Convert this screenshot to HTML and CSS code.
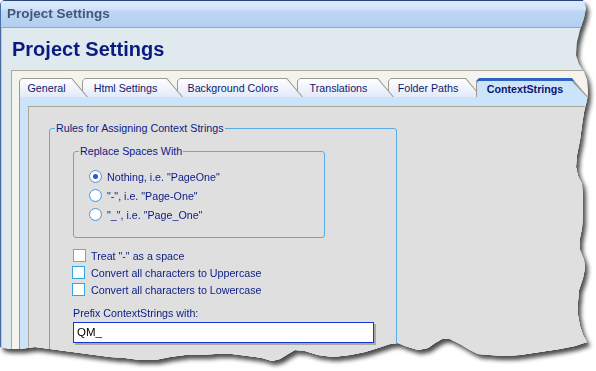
FILE: index.html
```html
<!DOCTYPE html>
<html lang="en">

<head>
    <meta charset="UTF-8">
    <title>Project Settings</title>
    <link rel="stylesheet" href="styles.css">
</head>

<body>
    <div class="sheet">
        <div class="window">
            <div class="titlebar">Project Settings</div>
            <div class="client">
                <h1 class="heading">Project Settings</h1>
                <div class="panel">
                    <div class="tabs">
                        <div class="tab t1"><span class="face">General</span></div>
                        <div class="tab t2"><span class="face">Html Settings</span></div>
                        <div class="tab t3"><span class="face">Background Colors</span></div>
                        <div class="tab t4"><span class="face">Translations</span></div>
                        <div class="tab t5"><span class="face">Folder Paths</span></div>
                        <div class="tab t6 active"><span class="face">ContextStrings</span></div>
                    </div>
                    <div class="tabpage">
                        <div class="pane">
                            <div class="group outer">
                                <span class="legend">Rules for Assigning Context Strings</span>
                                <div class="group inner">
                                    <span class="legend">Replace Spaces With</span>
                                    <div class="opt"><span class="radio on"></span>Nothing, i.e. "PageOne"</div>
                                    <div class="opt"><span class="radio"></span>"-", i.e. "Page-One"</div>
                                    <div class="opt"><span class="radio"></span>"_", i.e. "Page_One"</div>
                                </div>
                                <div class="checks">
                                    <div class="check"><span class="box plain"></span>Treat "-" as a space</div>
                                    <div class="check"><span class="box"></span>Convert all characters to Uppercase</div>
                                    <div class="check"><span class="box"></span>Convert all characters to Lowercase</div>
                                </div>
                                <div class="prefix">
                                    <div class="prefix_label">Prefix ContextStrings with:</div>
                                    <div class="textbox">QM_</div>
                                </div>
                            </div>
                        </div>
                    </div>
                </div>
            </div>
        </div>
    </div>
</body>

</html>
```

FILE: styles.css
```css
* {
    margin: 0;
    padding: 0;
    box-sizing: border-box;
}

body {
    background: #fff;
    font-family: "Liberation Sans", Arial, sans-serif;
    font-size: 10.7px;
    color: #0b1b86;
}

/* torn screenshot edge */
.sheet {
    width: 596px;
    height: 371px;
    filter: drop-shadow(3px 4px 2px rgba(0, 0, 0, .7));
}
.window {
    width: 596px;
    height: 371px;
    overflow: hidden;
    background: #dfe9ee;
    border-left: 1px solid #4a6ea4;
    border-top-left-radius: 5px;
    clip-path: polygon(0 0, 583px 0, 586px 8px, 584px 18px, 580px 30px, 577px 42px, 576px 55px, 579px 64px, 584px 72px, 587px 80px, 588px 92px, 587px 100px, 584px 112px, 582px 125px, 580px 140px, 577px 155px, 576px 167px, 578px 176px, 582px 184px, 583px 200px, 583px 215px, 582px 228px, 580px 238px, 580px 250px, 584px 260px, 585px 268px, 583px 278px, 579px 290px, 578px 302px, 578px 315px, 580px 326px, 583px 335px, 587px 342px,
        575px 346px, 560px 349px, 540px 352px, 520px 355px, 505px 356px, 490px 355px, 478px 354px, 470px 350px, 460px 344px, 450px 339px, 442px 339px, 435px 343px, 428px 348px, 418px 350px, 405px 346px, 398px 343px, 390px 344px, 378px 348px, 365px 352px, 350px 355px, 333px 357px, 318px 355px, 305px 351px, 295px 350px, 288px 354px, 280px 359px, 272px 361px, 262px 358px, 248px 356px, 232px 354px, 215px 354px, 200px 355px, 185px 355px, 170px 357px, 155px 360px, 140px 360px, 125px 358px, 110px 357px, 95px 355px, 80px 353px, 65px 351px, 50px 349px, 35px 347px, 20px 349px, 8px 349px, 0 347px);
}

.titlebar {
    height: 28px;
    border-top: 1px solid #28467a;
    border-bottom: 1px solid #8ea9d1;
    background: linear-gradient(#dbeafd 0, #d3e4fb 30%, #bdd6f4 40%, #b3cef0 100%);
    padding-left: 6px;
    line-height: 26px;
    font-size: 13.5px;
    font-weight: bold;
    color: #44577a;
}

.client {
    border-left: 1px solid #b4c8de;
    padding: 9px 0 0 9px;
}
.heading {
    margin-left: 1px;
    font-size: 20px;
    line-height: 24px;
    color: #0a1a7e;
}

.panel {
    margin-top: 9px;
    border-top: 1px solid #aca899;
    border-left: 1px solid #aca899;
    background: #f4f3ee;
    padding: 7px 0 0 7px;
}

/* tabs */
.tabs {
    display: flex;
    height: 19px;
}
.tab {
    position: relative;
    height: 19px;
    margin-right: -6px;
    padding: 1px 0 0 1px;
    background: #9c9a8c;
    clip-path: polygon(0 3px, 3px 0, calc(100% - 16px) 0, 100% 100%, 0 100%);
    color: #0e1a6e;
}
.tab .face {
    display: flex;
    justify-content: center;
    align-items: center;
    height: 18px;
    padding-right: 15px;
    background: linear-gradient(#fefeff, #e2eaf9);
    clip-path: polygon(0 2px, 2px 0, calc(100% - 16.5px) 0, calc(100% - 1.2px) 100%, 0 100%);
}
.t1 { width: 69px; z-index: 6; }
.t2 { width: 101px; z-index: 5; }
.t3 { width: 126px; z-index: 4; }
.t4 { width: 97px; z-index: 3; }
.t5 { width: 94px; z-index: 2; }
.t6 { width: 112px; z-index: 7; }
.tab.active {
    padding-top: 3px;
    background: linear-gradient(#2f63c2 0, #2f63c2 3px, #9c9a8c 3px);
}
.tab.active .face {
    height: 16px;
    background: #cce4f9;
    font-weight: bold;
    color: #0c1675;
}

.tabpage {
    background: #cce4f9;
    border-left: 1px solid #9c9a8c;
    padding: 9px 0 0 8px;
}
.pane {
    height: 300px;
    background: #dfdfdf;
    border-top: 1px solid #aca899;
    border-left: 1px solid #aca899;
    padding: 21px 0 0 20px;
}

/* group boxes: the caption sits over the top border */
.group {
    position: relative;
    border: 1px solid #58ace4;
    border-radius: 3px;
}
.group > .legend {
    position: absolute;
    top: -8px;
    padding: 0 1px;
    line-height: 14px;
    background: #dfdfdf;
}
.outer {
    width: 348px;
    height: 260px;
    padding: 22px 0 0 23px;
}
.outer > .legend {
    left: 5px;
}
.inner {
    width: 252px;
    padding: 15px 0 13px 15px;
}
.inner > .legend {
    left: 5px;
}
.opt {
    display: flex;
    align-items: center;
    height: 19px;
}
.radio {
    position: relative;
    width: 13px;
    height: 13px;
    margin-right: 5px;
    border: 1px solid #4b97dc;
    border-radius: 50%;
    background: radial-gradient(circle at 40% 40%, #fff 40%, #e3ebf3);
}
.radio.on::after {
    content: "";
    position: absolute;
    left: 3px;
    top: 3px;
    width: 5px;
    height: 5px;
    border-radius: 50%;
    background: #2b57c8;
}

.checks {
    margin: 9px 0 0 -1px;
}
.check {
    display: flex;
    align-items: center;
    height: 17px;
}
.box {
    width: 13px;
    height: 13px;
    margin-right: 6px;
    border: 1px solid #36a4e2;
    background: #fff;
}
.box.plain {
    margin-left: 1px;
    margin-right: 5px;
    border-color: #8a9db4;
}

.prefix {
    margin-top: 8px;
}
.prefix_label {
    line-height: 14px;
}
.textbox {
    width: 301px;
    height: 21px;
    margin-top: 2px;
    padding-left: 3px;
    border: 1px solid #1437c8;
    background: #fff;
    box-shadow: 2px 2px 0 #a9a9a9;
    line-height: 19px;
    font-size: 11.5px;
    color: #000;
}
```
